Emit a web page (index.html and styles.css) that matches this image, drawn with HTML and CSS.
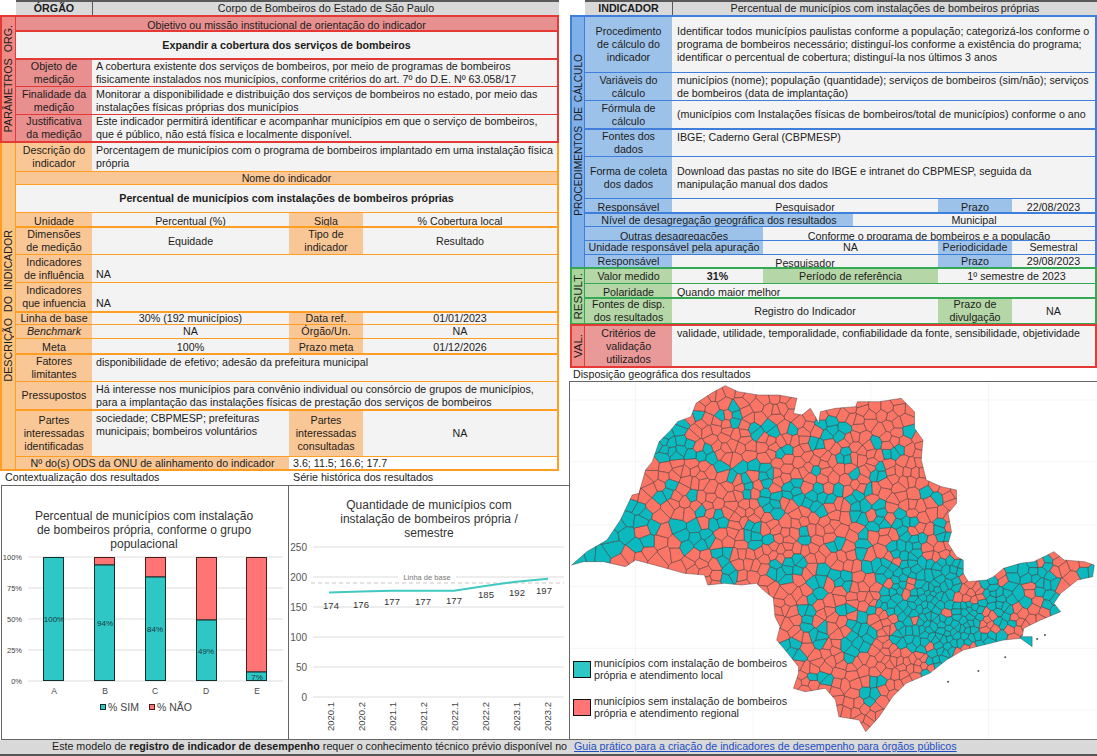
FILE: index.html
```html
<!DOCTYPE html>
<html lang="pt-BR">
<head>
  <meta charset="UTF-8">
  <title>Registro de indicador de desempenho</title>
  <link rel="stylesheet" href="styles.css">
</head>
<body>
  <div class="page">
    <div class="col-left">
      <div class="panel">
        <div class="head side-l c2-l">
          <div class="hcell"><b>ÓRGÃO</b></div>
          <div class="hcell">Corpo de Bombeiros do Estado de São Paulo</div>
        </div>

        <!-- parametros -->
        <div class="sec red left-sec">
          <div class="side"><span>PARÂMETROS ORG.</span></div>
          <div class="rows">
            <div class="row h13 one"><div class="lab low">Objetivo ou missão institucional de orientação do indicador</div></div>
            <div class="row h28 one thick"><div class="val"><b>Expandir a cobertura dos serviços de bombeiros</b></div></div>
            <div class="row h28 c2-l thick">
              <div class="lab">Objeto de<br>medição</div>
              <div class="val txt">A cobertura existente dos serviços de bombeiros, por meio de programas de bombeiros<br>fisicamente instalados nos municípios, conforme critérios do art. 7º do D.E. Nº 63.058/17</div>
            </div>
            <div class="row h28 c2-l">
              <div class="lab">Finalidade da<br>medição</div>
              <div class="val txt">Monitorar a disponibilidade e distribuição dos serviços de bombeiros no estado, por meio das<br>instalações físicas próprias dos municípios</div>
            </div>
            <div class="row h27 c2-l">
              <div class="lab">Justificativa<br>da medição</div>
              <div class="val txt">Este indicador permitirá identificar e acompanhar municípios em que o serviço de bombeiros,<br>que é público, não está física e localmente disponível.</div>
            </div>
          </div>
        </div>

        <!-- descricao -->
        <div class="sec orange left-sec">
          <div class="side"><span>DESCRIÇÃO DO INDICADOR</span></div>
          <div class="rows">
            <div class="row h28 c2-l first">
              <div class="lab">Descrição do<br>indicador</div>
              <div class="val txt">Porcentagem de municípios com o programa de bombeiros implantado em uma instalação física<br>própria</div>
            </div>
            <div class="row h13 one"><div class="lab">Nome do indicador</div></div>
            <div class="row h28 one"><div class="val"><b>Percentual de municípios com instalações de bombeiros próprias</b></div></div>
            <div class="row h14 c4-l">
              <div class="lab low">Unidade</div><div class="val low">Percentual (%)</div>
              <div class="lab low">Sigla</div><div class="val low">% Cobertura local</div>
            </div>
            <div class="row h28 c4-l thick">
              <div class="lab">Dimensões<br>de medição</div><div class="val">Equidade</div>
              <div class="lab">Tipo de<br>indicador</div><div class="val">Resultado</div>
            </div>
            <div class="row h28 c2-l">
              <div class="lab">Indicadores<br>de influência</div><div class="val txt end">NA</div>
            </div>
            <div class="row h29 c2-l">
              <div class="lab">Indicadores<br>que infuencia</div><div class="val txt end">NA</div>
            </div>
            <div class="row h13 c4-l thick">
              <div class="lab">Linha de base</div><div class="val">30% (192 municípios)</div>
              <div class="lab">Data ref.</div><div class="val">01/01/2023</div>
            </div>
            <div class="row h14 c4-l">
              <div class="lab"><i>Benchmark</i></div><div class="val">NA</div>
              <div class="lab">Órgão/Un.</div><div class="val">NA</div>
            </div>
            <div class="row h15 c4-l">
              <div class="lab low">Meta</div><div class="val low">100%</div>
              <div class="lab low">Prazo meta</div><div class="val low">01/12/2026</div>
            </div>
            <div class="row h28 c2-l thick">
              <div class="lab">Fatores<br>limitantes</div><div class="val txt top">disponibilidade de efetivo; adesão da prefeitura municipal</div>
            </div>
            <div class="row h28 c2-l">
              <div class="lab">Pressupostos</div>
              <div class="val txt">Há interesse nos municípios para convênio individual ou consórcio de grupos de municípios,<br>para a implantação das instalações físicas de prestação dos serviços de bombeiros</div>
            </div>
            <div class="row h47 c4-l thick">
              <div class="lab">Partes<br>interessadas<br>identificadas</div>
              <div class="val txt top">sociedade; CBPMESP; prefeituras<br>municipais; bombeiros voluntários</div>
              <div class="lab">Partes<br>interessadas<br>consultadas</div>
              <div class="val">NA</div>
            </div>
            <div class="row h13 ods">
              <div class="lab">Nº do(s) ODS da ONU de alinhamento do indicador</div>
              <div class="val txt">3.6; 11.5; 16.6; 17.7</div>
            </div>
          </div>
        </div>
      </div>

      <div class="captions-left">
        <div>Contextualização dos resultados</div>
        <div>Série histórica dos resultados</div>
      </div>

      <div class="charts">
        <div class="chart-box">
          <svg class="chart" width="286" height="253" viewBox="2 486 286 253">
            <text class="ctitle" x="144" y="520">Percentual de municípios com instalação</text>
            <text class="ctitle" x="144" y="534">de bombeiros própria, conforme o grupo</text>
            <text class="ctitle" x="144" y="548">populacional</text>

            <g class="grid">
              <line x1="28" y1="557" x2="283" y2="557"/>
              <line x1="28" y1="588" x2="283" y2="588"/>
              <line x1="28" y1="619" x2="283" y2="619"/>
              <line x1="28" y1="650" x2="283" y2="650"/>
              <line x1="28" y1="681" x2="283" y2="681"/>
            </g>
            <text class="ylab" x="22" y="560">100%</text>
            <text class="ylab" x="22" y="591">75%</text>
            <text class="ylab" x="22" y="622">50%</text>
            <text class="ylab" x="22" y="653">25%</text>
            <text class="ylab" x="22" y="684">0%</text>

            <g class="bars">
              <rect class="sim" x="43.5" y="557.5" width="20" height="123"/>
              <rect class="nao" x="94.5" y="557.5" width="20" height="7.5"/>
              <rect class="sim" x="94.5" y="565" width="20" height="115.5"/>
              <rect class="nao" x="145.5" y="557.5" width="20" height="19.5"/>
              <rect class="sim" x="145.5" y="577" width="20" height="103.5"/>
              <rect class="nao" x="196.5" y="557.5" width="20" height="62.5"/>
              <rect class="sim" x="196.5" y="620" width="20" height="60.5"/>
              <rect class="nao" x="246.5" y="557.5" width="20" height="114.5"/>
              <rect class="sim" x="246.5" y="672" width="20" height="8.5"/>
            </g>
            <text class="dlab" x="54" y="622">100%</text>
            <text class="dlab" x="105" y="626">94%</text>
            <text class="dlab" x="155" y="632">84%</text>
            <text class="dlab" x="206" y="654">49%</text>
            <text class="dlab" x="257" y="680">7%</text>

            <text class="xlab" x="54" y="694">A</text>
            <text class="xlab" x="105" y="694">B</text>
            <text class="xlab" x="155" y="694">C</text>
            <text class="xlab" x="206" y="694">D</text>
            <text class="xlab" x="257" y="694">E</text>

            <rect class="sim" x="100.5" y="704.5" width="5" height="5"/>
            <text class="leg" x="108" y="711">% SIM</text>
            <rect class="nao" x="149.5" y="704.5" width="5" height="5"/>
            <text class="leg" x="157" y="711">% NÃO</text>
          </svg>
        </div>

        <div class="chart-box second">
          <svg class="chart" width="280" height="253" viewBox="289 486 280 253">
            <text class="ctitle" x="429" y="509">Quantidade de municípios com</text>
            <text class="ctitle" x="429" y="523">instalação de bombeiros própria /</text>
            <text class="ctitle" x="429" y="537">semestre</text>

            <g class="grid">
              <line x1="313" y1="547" x2="564" y2="547"/>
              <line x1="313" y1="577" x2="564" y2="577"/>
              <line x1="313" y1="607" x2="564" y2="607"/>
              <line x1="313" y1="637" x2="564" y2="637"/>
              <line x1="313" y1="667" x2="564" y2="667"/>
              <line x1="313" y1="697" x2="564" y2="697"/>
            </g>
            <text class="ylab2" x="307" y="551">250</text>
            <text class="ylab2" x="307" y="581">200</text>
            <text class="ylab2" x="307" y="611">150</text>
            <text class="ylab2" x="307" y="641">100</text>
            <text class="ylab2" x="307" y="671">50</text>
            <text class="ylab2" x="307" y="701">0</text>

            <line class="base" x1="311" y1="583" x2="564" y2="583"/>
            <rect x="398" y="572" width="58" height="9" fill="#fff"/>
            <text class="baselab" x="427" y="580">Linha de base</text>

            <polyline class="serie" points="329,592.6 361,591.4 392,590.8 423,590.8 454,590.8 485,586 516,581.8 548,578.8"/>
            <text class="dlab2" x="331" y="609">174</text>
            <text class="dlab2" x="361" y="608">176</text>
            <text class="dlab2" x="392" y="605">177</text>
            <text class="dlab2" x="423" y="605">177</text>
            <text class="dlab2" x="454" y="604">177</text>
            <text class="dlab2" x="486" y="598">185</text>
            <text class="dlab2" x="517" y="596">192</text>
            <text class="dlab2" x="544" y="594">197</text>

            <g class="xrot">
              <text transform="translate(334 702) rotate(-90)">2020.1</text>
              <text transform="translate(365 702) rotate(-90)">2020.2</text>
              <text transform="translate(396 702) rotate(-90)">2021.1</text>
              <text transform="translate(427 702) rotate(-90)">2021.2</text>
              <text transform="translate(458 702) rotate(-90)">2022.1</text>
              <text transform="translate(489 702) rotate(-90)">2022.2</text>
              <text transform="translate(520 702) rotate(-90)">2023.1</text>
              <text transform="translate(551 702) rotate(-90)">2023.2</text>
            </g>
          </svg>
        </div>
      </div>
    </div>

    <div class="col-right">
      <div class="panel">
        <div class="head side-r c2-r">
          <div class="hcell"><b>INDICADOR</b></div>
          <div class="hcell">Percentual de municípios com instalações de bombeiros próprias</div>
        </div>

        <!-- procedimentos -->
        <div class="sec blue right-sec no-bottom">
          <div class="side"><span>PROCEDIMENTOS DE CÁLCULO</span></div>
          <div class="rows">
            <div class="row h55 c2-r">
              <div class="lab">Procedimento<br>de cálculo do<br>indicador</div>
              <div class="val txt">Identificar todos municípios paulistas conforme a população; categorizá-los conforme o<br>programa de bombeiros necessário; distinguí-los conforme a existência do programa;<br>identificar o percentual de cobertura; distinguí-la nos últimos 3 anos</div>
            </div>
            <div class="row h28 c2-r">
              <div class="lab">Variáveis do<br>cálculo</div>
              <div class="val txt">municípios (nome); população (quantidade); serviços de bombeiros (sim/não); serviços<br>de bombeiros (data de implantação)</div>
            </div>
            <div class="row h28 c2-r">
              <div class="lab">Fórmula de<br>cálculo</div>
              <div class="val txt">(municípios com Instalações físicas de bombeiros/total de municípios) conforme o ano</div>
            </div>
            <div class="row h28 c2-r thick">
              <div class="lab">Fontes dos<br>dados</div>
              <div class="val txt top">IBGE; Caderno Geral (CBPMESP)</div>
            </div>
            <div class="row h42 c2-r">
              <div class="lab">Forma de coleta<br>dos dados</div>
              <div class="val txt">Download das pastas no site do IBGE e intranet do CBPMESP, seguida da<br>manipulação manual dos dados</div>
            </div>
            <div class="row h14 c4-r">
              <div class="lab low">Responsável</div><div class="val low">Pesquisador</div>
              <div class="lab low">Prazo</div><div class="val low">22/08/2023</div>
            </div>
            <div class="row h14 c-nivel thick">
              <div class="lab">Nível de desagregação geográfica dos resultados</div><div class="val">Municipal</div>
            </div>
            <div class="row h14 c-outras">
              <div class="lab lower">Outras desagregações</div><div class="val lower">Conforme o programa de bombeiros e a população</div>
            </div>
            <div class="row h14 c-unid">
              <div class="lab">Unidade responsável pela apuração</div><div class="val">NA</div>
              <div class="lab">Periodicidade</div><div class="val">Semestral</div>
            </div>
            <div class="row h13 c4-r">
              <div class="lab">Responsável</div><div class="val low">Pesquisador</div>
              <div class="lab">Prazo</div><div class="val">29/08/2023</div>
            </div>
          </div>
        </div>

        <!-- resultado -->
        <div class="sec green right-sec">
          <div class="side"><span>RESULT.</span></div>
          <div class="rows">
            <div class="row h14 c-valor first">
              <div class="lab">Valor medido</div><div class="val"><b>31%</b></div>
              <div class="lab">Período de referência</div><div class="val">1º semestre de 2023</div>
            </div>
            <div class="row h14 c2-r">
              <div class="lab low">Polaridade</div><div class="val txt low">Quando maior melhor</div>
            </div>
            <div class="row h26 c4-r thick">
              <div class="lab">Fontes de disp.<br>dos resultados</div><div class="val">Registro do Indicador</div>
              <div class="lab">Prazo de<br>divulgação</div><div class="val">NA</div>
            </div>
          </div>
        </div>

        <!-- validacao -->
        <div class="sec redval right-sec">
          <div class="side"><span>VAL.</span></div>
          <div class="rows">
            <div class="row h40 c2-r first">
              <div class="lab">Critérios de<br>validação<br>utilizados</div>
              <div class="val txt top">validade, utilidade, temporalidade, confiabilidade da fonte, sensibilidade, objetividade</div>
            </div>
          </div>
        </div>
      </div>

      <div class="caption-right">Disposição geográfica dos resultados</div>

      <div class="map-box">
        <svg id="map" class="map" width="527" height="357" viewBox="0 6 1568 1071" preserveAspectRatio="none"></svg>
        <div class="map-legend">
          <div class="leg-item">
            <span class="swatch teal"></span>
            <span>municípios com instalação de bombeiros<br>própria e atendimento local</span>
          </div>
          <div class="leg-item">
            <span class="swatch salmon"></span>
            <span>municípios sem instalação de bombeiros<br>própria e atendimento regional</span>
          </div>
        </div>
      </div>
    </div>
  </div>

  <div class="footer">
    <span>Este modelo de <b>registro de indicador de desempenho</b> requer o conhecimento técnico prévio disponível no</span>
    <a href="#">Guia prático para a criação de indicadores de desempenho para órgãos públicos</a>
  </div>

  <script src="map.js"></script>
</body>
</html>
```

FILE: styles.css
```css
* { margin: 0; padding: 0; box-sizing: border-box; }
body {
  font-family: "Liberation Sans", Arial, sans-serif;
  font-size: 10.7px;
  line-height: 13px;
  color: #1c1c1c;
  background: #fff;
  width: 1097px;
  height: 756px;
  overflow: hidden;
}
.page { display: flex; height: 740px; }
.col-left { width: 569px; }
.col-right { width: 528px; }
.col-right .panel { margin-left: 1px; }

/* header strip */
.head {
  display: grid;
  height: 15px;
  background: #d9d9d9;
  border-top: 2px solid #595959;
}
.side-l { margin-left: 16px; width: 543px; }
.side-r { margin-left: 15px; }
.hcell {
  text-align: center;
  line-height: 12px;
  overflow: hidden;
}
.hcell + .hcell { border-left: 1px solid #595959; }
.head.c2-l { grid-template-columns: 76px 1fr; }
.head.c2-r { grid-template-columns: 87px 1fr; }

/* sections */
.sec { display: flex; border: 2px solid var(--line); }
.left-sec { width: 559px; }
.sec.orange { border-top: 0; }
.sec.no-bottom { border-bottom: 0; }
.sec.green { border-bottom-width: 1px; }
.side {
  background: var(--side);
  border-right: 1px solid var(--line);
  display: flex;
  align-items: center;
  justify-content: center;
  flex-shrink: 0;
}
.left-sec .side { width: 14px; }
.right-sec .side { width: 13px; }
.blue .side { padding-bottom: 14px; }
.side span {
  writing-mode: vertical-rl;
  transform: rotate(180deg);
  white-space: nowrap;
  font-size: 10.7px;
  word-spacing: 3px;
}
.blue .side span { font-size: 10.2px; word-spacing: 2px; }
.green .side span, .redval .side span { font-size: 11.5px; }
.rows { flex: 1; min-width: 0; }

.red { --line: #e53935; --fill: #e88f8f; --side: #f08a84; }
.orange { --line: #ff9e22; --fill: #f9c795; --side: #fbc585; }
.blue { --line: #3f7fdb; --fill: #9cc2ea; --side: #7fb0ea; }
.green { --line: #35a854; --fill: #b5d6a7; --side: #a9d49a; }
.redval { --line: #e53935; --fill: #ea9999; --side: #ee8f8b; }

/* rows and cells */
.row {
  display: grid;
  border-top: 1px solid var(--line);
  overflow: hidden;
}
.row.thick { border-top-width: 2px; }
.row.first, .row:first-child { border-top: 0; }
.one { grid-template-columns: 1fr; }
.c2-l { grid-template-columns: 76px 1fr; }
.c4-l { grid-template-columns: 76px 197px 74px 1fr; }
.ods { grid-template-columns: 273px 1fr; }
.c2-r { grid-template-columns: 87px 1fr; }
.c4-r { grid-template-columns: 87px 266px 74px 1fr; }
.c-nivel { grid-template-columns: 268px 1fr; }
.c-outras { grid-template-columns: 178px 1fr; }
.c-unid { grid-template-columns: 178px 175px 74px 1fr; }
.c-valor { grid-template-columns: 87px 91px 175px 1fr; }

.h13 { height: 13px; }
.h14 { height: 14px; }
.h15 { height: 15px; }
.h26 { height: 26px; }
.h27 { height: 27px; }
.h28 { height: 28px; }
.h29 { height: 29px; }
.h40 { height: 40px; }
.h42 { height: 42px; }
.h47 { height: 47px; }
.h55 { height: 55px; }

.lab, .val {
  display: flex;
  align-items: center;
  justify-content: center;
  text-align: center;
  white-space: nowrap;
  overflow: hidden;
}
.lab { background: var(--fill); }
.val { background: #f3f3f3; }
.txt {
  justify-content: flex-start;
  text-align: left;
  padding-left: 4px;
}
.right-sec .txt { padding-left: 5px; }
.top { align-items: flex-start; padding-top: 1px; }
.end { align-items: flex-end; padding-bottom: 1px; }
.low { align-items: flex-start; padding-top: 2px; }
.lower { align-items: flex-start; padding-top: 3px; }
.ods .val { background: #fff; }

/* captions */
.captions-left {
  display: grid;
  grid-template-columns: 293px 1fr;
  height: 14px;
  padding-left: 5px;
}
.captions-left div + div { margin-left: -5px; }
.caption-right { height: 13px; padding-left: 4px; }

/* charts */
.charts { display: flex; margin-left: 1px; height: 255px; }
.chart-box {
  width: 288px;
  border: 1px solid #666;
}
.chart-box.second {
  width: 280px;
  border-left: 0;
  border-right: 0;
}
.chart { display: block; font-family: "Liberation Sans", Arial, sans-serif; }
.ctitle { font-size: 12px; text-anchor: middle; fill: #333; }
.grid line { stroke: #dcdcdc; stroke-width: 1; }
.ylab { font-size: 7.5px; text-anchor: end; fill: #444; }
.ylab2 { font-size: 10px; text-anchor: end; fill: #555; }
.dlab { font-size: 8px; text-anchor: middle; fill: #17393a; }
.dlab2 { font-size: 9.5px; text-anchor: middle; fill: #333; }
.xlab { font-size: 8.5px; text-anchor: middle; fill: #444; }
.leg { font-size: 10.5px; fill: #444; }
.sim { fill: #2fc6c6; stroke: #10302f; stroke-width: 1; }
.nao { fill: #ff7474; stroke: #4a1c1c; stroke-width: 1; }
.base { stroke: #cfc4c4; stroke-width: 1; stroke-dasharray: 4 3; }
.baselab { font-size: 7.5px; text-anchor: middle; fill: #777; }
.serie { fill: none; stroke: #40c9c0; stroke-width: 2; }
.xrot text { font-size: 9.5px; text-anchor: end; fill: #444; }

/* map */
.map-box {
  position: relative;
  width: 528px;
  height: 359px;
  border: 1px solid #666;
  border-right: 0;
}
.map { display: block; }
.map-legend {
  position: absolute;
  left: 3px;
  top: 274px;
  display: flex;
  flex-direction: column;
  gap: 12px;
  line-height: 12px;
  color: #2b2b2b;
}
.leg-item { display: flex; align-items: center; gap: 3px; height: 26px; }
.swatch {
  width: 18px;
  height: 17px;
  border: 1px solid #111;
}
.swatch.teal { background: #2fc6c6; }
.swatch.salmon { background: #ff7474; }

/* footer */
.footer {
  height: 16px;
  background: #d9d9d9;
  border-bottom: 2px solid #555;
  padding-left: 52px;
  display: flex;
  gap: 7px;
  white-space: nowrap;
  line-height: 13px;
}
.footer a { color: #1f4fc4; }
```

FILE: map.js
```js
// Sao Paulo state drawn as a mosaic of municipalities.
// Coordinates are zoomed screen pixels, origin at the map box corner.
var outline = [
  [5,555],[50,515],[110,480],[150,420],[185,345],[205,340],[225,270],[245,245],[265,185],[300,150],
  [320,125],[360,110],[375,70],[420,40],[462,17],[500,35],[560,45],[620,45],[675,55],[665,100],
  [690,105],[715,85],[730,110],[740,130],[745,95],[790,85],[850,80],[855,65],[920,65],[985,55],
  [1025,95],[1025,145],[1050,180],[1045,240],[1060,300],[1105,320],[1150,330],[1150,370],[1125,400],
  [1135,455],[1125,490],[1150,530],[1170,540],[1170,580],[1185,605],[1240,600],[1260,590],[1290,565],
  [1340,550],[1380,545],[1440,515],[1470,540],[1530,545],[1560,555],[1555,590],[1510,600],[1460,640],
  [1440,670],[1460,695],[1400,720],[1350,745],[1345,770],[1375,770],[1375,800],[1340,775],[1290,780],
  [1230,795],[1170,810],[1120,840],[1070,880],[1000,910],[960,950],[920,1010],[880,1055],[860,1020],
  [800,1010],[790,960],[760,925],[700,935],[665,925],[680,880],[680,860],[640,810],[615,780],[625,740],
  [610,710],[605,655],[575,630],[555,610],[510,615],[460,610],[410,615],[400,585],[340,580],[270,560],
  [195,540],[165,560],[100,545],[40,545]
];

// patches served locally: cx, cy, rx, ry
var teal = [
  [60,530,60,30],[130,505,50,40],[170,420,25,70],[200,500,40,25],[225,400,20,35],[290,340,18,40],[270,350,15,20],
  [300,190,40,60],[335,130,30,20],[355,190,25,20],[450,110,15,25],[495,105,15,30],[545,145,25,20],[605,155,25,30],
  [660,150,20,25],[380,105,10,15],[780,150,40,40],[725,190,28,25],[645,210,25,25],[805,235,22,28],[910,190,12,15],
  [965,220,30,30],[1010,155,25,15],[390,225,50,20],[450,260,25,20],[510,260,20,15],[480,295,15,30],[530,320,15,35],
  [580,265,35,25],[580,340,20,35],[365,350,15,30],[390,390,10,20],[730,270,15,20],[845,285,25,25],[925,285,20,25],
  [890,330,15,25],[1060,335,30,30],[1090,355,18,18],[610,370,25,30],[670,335,35,30],[710,370,20,20],[750,350,30,30],
  [800,330,25,20],[610,400,25,15],[745,395,25,25],[850,380,30,50],[920,420,20,45],[1000,425,30,30],[1105,430,25,25],
  [1105,470,25,20],[1050,475,20,20],[450,425,25,25],[550,470,25,50],[595,480,20,15],[320,440,10,40],[250,440,15,25],
  [375,475,50,50],[345,500,20,40],[440,520,35,25],[475,570,20,40],[700,480,30,30],[800,490,25,25],[870,490,30,30],
  [960,500,25,30],[1010,500,25,40],[645,570,50,30],[690,550,30,20],[750,570,20,30],[820,590,35,30],[740,640,35,40],
  [1050,650,140,110],[930,570,50,30],[1120,570,50,40],[1300,640,90,50],[1400,610,50,50],[1530,575,35,25],
  [1260,640,30,40],[1350,570,40,30],[1420,540,15,25],[1440,660,40,35],[1300,710,30,35],[1360,780,20,25],
  [1200,750,100,50],[1100,770,80,60],[1200,700,30,40],[710,720,30,50],[745,770,30,30],[660,815,30,35],
  [840,815,45,30],[870,750,45,40],[810,690,30,25],[900,690,15,15],[750,890,40,20],[880,940,30,35],[925,905,30,20],
  [1090,840,25,25],[1060,880,8,15],[980,740,40,50],[1010,780,40,30]
];

// red patches that sit inside the teal ones
var salmon = [
  [1190,640,45,30],[1345,700,30,25],[1250,735,25,25],[1370,620,12,20],[1025,720,12,15],[1010,620,20,25],[950,610,20,15],
  [750,700,30,30],[795,765,35,35],[1070,800,25,15],[1290,600,15,20],[1120,700,8,20],[870,620,30,60],[940,730,25,40]
];

var seed = 12345;
function rnd() {
  seed = (seed * 16807) % 2147483647;
  return seed / 2147483647;
}

function inside(x, y, poly) {
  var hit = false;
  for (var i = 0, j = poly.length - 1; i < poly.length; j = i++) {
    var a = poly[i], b = poly[j];
    if ((a[1] > y) !== (b[1] > y) && x < (b[0] - a[0]) * (y - a[1]) / (b[1] - a[1]) + a[0]) hit = !hit;
  }
  return hit;
}

function inEllipse(x, y, list) {
  return list.some(function(e) {
    var dx = (x - e[0]) / e[2], dy = (y - e[1]) / e[3];
    return dx * dx + dy * dy <= 1;
  });
}

// wanted spacing between municipalities at a point
function spacing(x, y) {
  var d = Math.hypot(x - 1120, y - 720);
  var r = 14 + Math.min(d / 300, 1) * 13;
  if (x < 350 && y > 400) r = 40;
  return r * (0.65 + rnd() * 0.8);
}

var seeds = teal.concat(salmon).map(function(e) { return [e[0], e[1]]; }).filter(function(p, i, all) {
  return all.findIndex(function(q) { return Math.hypot(p[0] - q[0], p[1] - q[1]) < 12; }) === i;
});
for (var n = 0; n < 30000; n++) {
  var x = rnd() * 1581, y = rnd() * 1080;
  if (!inside(x, y, outline)) continue;
  var r = spacing(x, y);
  var close = seeds.some(function(p) { return Math.hypot(p[0] - x, p[1] - y) < r; });
  if (!close) seeds.push([x, y]);
}

// voronoi cell: cut a big box with the bisector towards each neighbour
function cell(s) {
  var near = seeds.filter(function(p) { return p !== s; }).sort(function(a, b) {
    return Math.hypot(a[0] - s[0], a[1] - s[1]) - Math.hypot(b[0] - s[0], b[1] - s[1]);
  }).slice(0, 24);
  var poly = [[s[0] - 200, s[1] - 200], [s[0] + 200, s[1] - 200], [s[0] + 200, s[1] + 200], [s[0] - 200, s[1] + 200]];
  near.forEach(function(t) {
    var mx = (s[0] + t[0]) / 2, my = (s[1] + t[1]) / 2, nx = t[0] - s[0], ny = t[1] - s[1];
    var out = [];
    for (var i = 0; i < poly.length; i++) {
      var a = poly[i], b = poly[(i + 1) % poly.length];
      var da = (a[0] - mx) * nx + (a[1] - my) * ny, db = (b[0] - mx) * nx + (b[1] - my) * ny;
      if (da <= 0) out.push(a);
      if ((da < 0) !== (db < 0)) {
        var k = da / (da - db);
        out.push([a[0] + (b[0] - a[0]) * k, a[1] + (b[1] - a[1]) * k]);
      }
    }
    poly = out;
  });
  return poly;
}

function el(name, attrs, parent) {
  var node = document.createElementNS('http://www.w3.org/2000/svg', name);
  for (var k in attrs) node.setAttribute(k, attrs[k]);
  parent.appendChild(node);
  return node;
}

var svg = document.getElementById('map');
var points = outline.map(function(p) { return p.join(','); }).join(' ');

// faint plot grid behind the state
[195, 545, 895, 1245].forEach(function(x) {
  el('line', { x1: x, y1: 6, x2: x, y2: 1077, stroke: '#f2f2f2', 'stroke-width': 2 }, svg);
});
[60, 245, 435, 620, 805, 990].forEach(function(y) {
  el('line', { x1: 0, y1: y, x2: 1581, y2: y, stroke: '#f2f2f2', 'stroke-width': 2 }, svg);
});

var clip = el('clipPath', { id: 'state' }, el('defs', {}, svg));
el('polygon', { points: points }, clip);
var group = el('g', { 'clip-path': 'url(#state)' }, svg);

seeds.forEach(function(s) {
  var isTeal = inEllipse(s[0], s[1], teal) && !inEllipse(s[0], s[1], salmon);
  el('polygon', {
    points: cell(s).map(function(p) { return p[0].toFixed(1) + ',' + p[1].toFixed(1); }).join(' '),
    fill: isTeal ? '#0cb9be' : '#fb7567',
    stroke: '#3a3030',
    'stroke-width': 1.8,
    'stroke-opacity': 0.75
  }, group);
});
el('polygon', { points: points, fill: 'none', stroke: '#3a3030', 'stroke-width': 2, 'stroke-opacity': 0.6 }, svg);

// islands off the coast
[[1295,832],[1390,777],[1413,765],[1215,873],[1125,905]].forEach(function(p) {
  el('circle', { cx: p[0], cy: p[1], r: 3, fill: '#555' }, svg);
});
```
